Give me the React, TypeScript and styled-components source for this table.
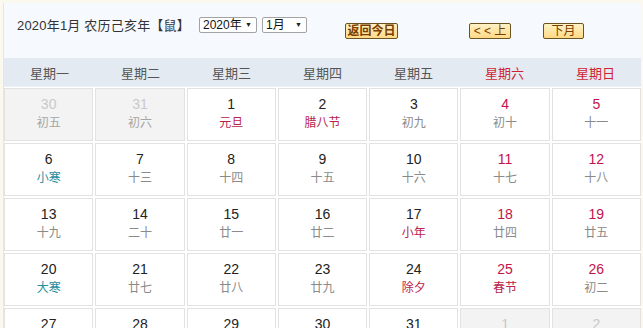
import styled, { createGlobalStyle } from 'styled-components'

const GlobalStyle = createGlobalStyle`
  html, body {
    margin: 0;
    padding: 0;
    background: #fbf9ee;
  }
  body {
    font-family: "Liberation Sans", "Noto Sans CJK SC", sans-serif;
    overflow: hidden;
  }
`

type Kind = 'normal' | 'other' | 'holiday' | 'term'

interface Day {
  num: number
  lunar: string
  kind?: Kind
}

const weeks: Day[][] = [
  [
    { num: 30, lunar: '初五', kind: 'other' },
    { num: 31, lunar: '初六', kind: 'other' },
    { num: 1, lunar: '元旦', kind: 'holiday' },
    { num: 2, lunar: '腊八节', kind: 'holiday' },
    { num: 3, lunar: '初九' },
    { num: 4, lunar: '初十' },
    { num: 5, lunar: '十一' },
  ],
  [
    { num: 6, lunar: '小寒', kind: 'term' },
    { num: 7, lunar: '十三' },
    { num: 8, lunar: '十四' },
    { num: 9, lunar: '十五' },
    { num: 10, lunar: '十六' },
    { num: 11, lunar: '十七' },
    { num: 12, lunar: '十八' },
  ],
  [
    { num: 13, lunar: '十九' },
    { num: 14, lunar: '二十' },
    { num: 15, lunar: '廿一' },
    { num: 16, lunar: '廿二' },
    { num: 17, lunar: '小年', kind: 'holiday' },
    { num: 18, lunar: '廿四' },
    { num: 19, lunar: '廿五' },
  ],
  [
    { num: 20, lunar: '大寒', kind: 'term' },
    { num: 21, lunar: '廿七' },
    { num: 22, lunar: '廿八' },
    { num: 23, lunar: '廿九' },
    { num: 24, lunar: '除夕', kind: 'holiday' },
    { num: 25, lunar: '春节', kind: 'holiday' },
    { num: 26, lunar: '初二' },
  ],
  [
    { num: 27, lunar: '初三' },
    { num: 28, lunar: '初四' },
    { num: 29, lunar: '初五' },
    { num: 30, lunar: '初六' },
    { num: 31, lunar: '初七' },
    { num: 1, lunar: '初八', kind: 'other' },
    { num: 2, lunar: '初九', kind: 'other' },
  ],
]

const weekdays = ['星期一', '星期二', '星期三', '星期四', '星期五', '星期六', '星期日']

const Panel = styled.div`
  margin: 3px 0 0 3px;
  width: 637px;
  background: #fff;
  border-left: 1px solid #ece7d2;
`

const Toolbar = styled.div`
  height: 55px;
  background: #f6f9fe;
  display: flex;
  align-items: flex-start;
  padding-left: 13px;
  font-size: 13px;
  color: #333;
`

const Title = styled.div`
  margin-top: 14px;
  line-height: 17px;
  white-space: nowrap;
  letter-spacing: 0.2px;
`

const Selects = styled.div`
  display: flex;
  gap: 5px;
  margin: 14px 0 0 9px;
`

const SelectBox = styled.div<{ $w: number }>`
  width: ${p => p.$w}px;
  height: 16px;
  box-sizing: border-box;
  border: 1px solid #a3a3a3;
  border-radius: 2px;
  background: #fff;
  display: flex;
  align-items: center;
  justify-content: space-between;
  padding: 0 4px 0 3px;
  font-size: 12px;
  color: #111;
  line-height: 14px;
`

const Caret = styled.span`
  font-size: 7px;
  color: #222;
`

const Btn = styled.div<{ $ml: number; $w: number; $bold?: boolean }>`
  margin: 20px 0 0 ${p => p.$ml}px;
  width: ${p => p.$w}px;
  height: 16px;
  box-sizing: border-box;
  border: 1px solid #6b5421;
  border-radius: 2px;
  background: linear-gradient(#fff2c4, #ffd986);
  font-size: 12px;
  line-height: 14px;
  font-weight: ${p => (p.$bold ? 700 : 400)};
  color: #7a3d00;
  text-align: center;
  white-space: nowrap;
`

const WeekHead = styled.div`
  display: grid;
  grid-template-columns: repeat(7, 1fr);
  height: 28px;
  background: #e3eaf2;
  border-bottom: 1px solid #ebf0f6;
`

const WeekName = styled.div<{ $weekend: boolean }>`
  display: flex;
  align-items: center;
  justify-content: center;
  font-size: 13px;
  color: ${p => (p.$weekend ? '#d11f33' : '#555')};
`

const Grid = styled.div`
  display: grid;
  grid-template-columns: repeat(7, 1fr);
  grid-auto-rows: 53px;
  gap: 2px;
  padding-top: 1px;
`

const Cell = styled.div<{ $other: boolean }>`
  border: 1px solid #e2e2e2;
  background: ${p => (p.$other ? '#f3f3f3' : '#fff')};
  display: flex;
  flex-direction: column;
  align-items: center;
  padding-top: 6px;
`

const Num = styled.div<{ $color: string }>`
  font-size: 14px;
  line-height: 18px;
  color: ${p => p.$color};
`

const Lunar = styled.div<{ $color: string }>`
  font-size: 12px;
  line-height: 18px;
  margin-top: 1px;
  color: ${p => p.$color};
`

const lunarColor = (kind: Kind) => {
  if (kind === 'other') return '#a5a5a5'
  if (kind === 'holiday') return '#b8234a'
  if (kind === 'term') return '#2a8ea0'
  return '#8a8a8a'
}

export default function App() {
  return (
    <>
      <GlobalStyle />
      <Panel>
        <Toolbar>
          <Title>2020年1月 农历己亥年【鼠】</Title>
          <Selects>
            <SelectBox $w={58}>
              2020年<Caret>▼</Caret>
            </SelectBox>
            <SelectBox $w={45}>
              1月<Caret>▼</Caret>
            </SelectBox>
          </Selects>
          <Btn $ml={38} $w={53} $bold>返回今日</Btn>
          <Btn $ml={71} $w={42}>&lt; &lt; 上</Btn>
          <Btn $ml={32} $w={41}>下月</Btn>
        </Toolbar>
        <WeekHead>
          {weekdays.map((w, i) => (
            <WeekName key={w} $weekend={i >= 5}>
              {w}
            </WeekName>
          ))}
        </WeekHead>
        <Grid>
          {weeks.flatMap((week, wi) =>
            week.map((d, di) => {
              const kind = d.kind ?? 'normal'
              const numColor = kind === 'other' ? '#c9c9c9' : di >= 5 ? '#c2134e' : '#222'
              return (
                <Cell key={`${wi}-${di}`} $other={kind === 'other'}>
                  <Num $color={numColor}>{d.num}</Num>
                  <Lunar $color={lunarColor(kind)}>{d.lunar}</Lunar>
                </Cell>
              )
            })
          )}
        </Grid>
      </Panel>
    </>
  )
}
